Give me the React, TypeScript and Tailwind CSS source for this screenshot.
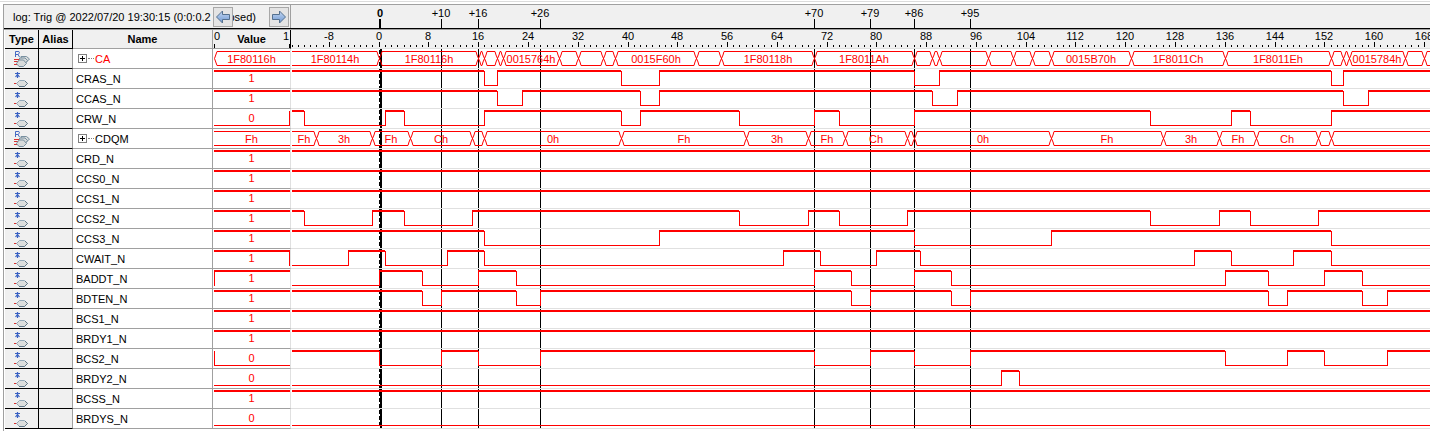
import React from "react";

const RED = "#ff0000";
const UNIT = 6.222;
const PANEL_LEFT = 291;
const PANEL_END = 4000;
const ROW = 20;
const RULER = 19;
const FIRST_SAMPLE = -14;
const LAST_SAMPLE = 168;

/** Horizontal position of a sample inside the wave panel. */
const at = (t: number) => Math.floor(379.12 + UNIT * t) - PANEL_LEFT;

type Line = {
  name: string;
  value: string;
  kind: "line";
  start: 0 | 1;
  edges: number[];
  edgeLeft?: boolean;
  edgeRight?: boolean;
};
type Bus = {
  name: string;
  value: string;
  kind: "bus";
  color?: string;
  edges: number[];
  labels: string[];
  edgeLeft?: boolean;
};
type Signal = Line | Bus;

const line = (name: string, value: string, start: 0 | 1, edges: number[] = [], extra: Partial<Line> = {}): Line => ({
  name,
  value,
  kind: "line",
  start,
  edges,
  ...extra,
});

const SIGNALS: Signal[] = [
  {
    name: "CA",
    value: "1F80116h",
    kind: "bus",
    color: RED,
    edgeLeft: true,
    edges: [0, 16, 17, 19, 20, 29, 32, 36, 38, 51, 55, 70, 86, 89, 90, 98, 102, 105, 108, 121, 136, 153, 155, 156, 165, 168],
    labels: [
      "1F80114h", "1F80116h", "", "", "", "0015764h", "", "", "", "0015F60h", "", "1F80118h", "1F8011Ah",
      "", "", "", "", "", "", "0015B70h", "1F8011Ch", "1F8011Eh", "", "", "0015784h", "",
    ],
  },
  line("CRAS_N", "1", 1, [17, 19, 39, 45, 86, 90, 153, 155]),
  line("CCAS_N", "1", 1, [19, 23, 42, 45, 89, 93, 155, 159]),
  line("CRW_N", "0", 1, [-12, 1, 4, 17, 39, 42, 58, 70, 74, 86, 124, 137, 140, 153], { edgeRight: true }),
  {
    name: "CDQM",
    value: "Fh",
    kind: "bus",
    edges: [-10, -1, 5, 15, 17, 39, 59, 69, 75, 85, 86, 108, 126, 135, 141, 151, 153],
    labels: ["Fh", "3h", "Fh", "Ch", "", "0h", "Fh", "3h", "Fh", "Ch", "", "0h", "Fh", "3h", "Fh", "Ch", ""],
  },
  line("CRD_N", "1", 1),
  line("CCS0_N", "1", 1),
  line("CCS1_N", "1", 1),
  line("CCS2_N", "1", 1, [-12, -1, 4, 15, 58, 69, 74, 85, 124, 135, 140, 151]),
  line("CCS3_N", "1", 1, [17, 45, 86, 108, 153]),
  line("CWAIT_N", "1", 0, [-5, 1, 11, 17, 65, 71, 80, 87, 131, 137, 147, 153], { edgeRight: true }),
  line("BADDT_N", "1", 0, [0, 7, 16, 22, 70, 76, 86, 92, 136, 143, 152, 158], { edgeLeft: true }),
  line("BDTEN_N", "1", 1, [7, 10, 22, 26, 76, 79, 92, 95, 143, 146, 158, 162]),
  line("BCS1_N", "1", 1),
  line("BRDY1_N", "1", 1),
  line("BCS2_N", "0", 1, [0, 10, 16, 26, 70, 79, 86, 95, 136, 146, 152, 162], { edgeLeft: true }),
  line("BRDY2_N", "0", 0, [100, 103]),
  line("BCSS_N", "1", 1),
  line("BRDYS_N", "0", 0),
];

const MARKERS = [10, 16, 26, 70, 79, 86, 95];

function LineTrace({ signal }: { signal: Line }) {
  const xs = [1, ...signal.edges.map(at), PANEL_END];
  return (
    <g fill={RED}>
      {xs.slice(0, -1).map((x, i) => {
        const high = (signal.start + i) % 2 === 1;
        return (
          <rect key={x} x={x} y={high ? 1 : 16} width={xs[i + 1] - x} height={high ? 2 : 1} />
        );
      })}
      {signal.edges.map((t) => (
        <rect key={`e${t}`} x={at(t)} y={2} width={1} height={15} />
      ))}
    </g>
  );
}

function BusTrace({ signal }: { signal: Bus }) {
  const xs = signal.edges.map(at);
  const bounds = [-2, ...xs, PANEL_END];
  return (
    <g>
      {bounds.slice(0, -1).map((x, i) => {
        const from = x + 3;
        const to = bounds[i + 1] - 2;
        return to > from ? (
          <path key={x} d={`M${from} 2.5H${to}M${from} 16.5H${to}`} stroke={RED} shapeRendering="crispEdges" />
        ) : null;
      })}
      {xs.map((x) => (
        <path
          key={`x${x}`}
          d={`M${x - 2} 2.5L${x - 1} 6L${x + 2} 13L${x + 3} 16.5M${x + 3} 2.5L${x + 2} 6L${x - 1} 13L${x - 2} 16.5`}
          stroke={RED}
          fill="none"
        />
      ))}
      {signal.labels.map((label, i) => {
        const from = i === 0 ? 0 : bounds[i];
        return label ? (
          <text key={i} x={Math.round((from + bounds[i + 1]) / 2)} y={14} fill={RED} textAnchor="middle">
            {label}
          </text>
        ) : null;
      })}
    </g>
  );
}

function ValueTrace({ signal }: { signal: Signal }) {
  return (
    <svg className="block h-[19px] w-full" aria-label={`${signal.name} value`}>
      {signal.kind === "bus" ? (
        <g stroke={RED} fill="none">
          {signal.edgeLeft ? (
            <path d="M77 2.5H4L1.5 9.5L4 16.5H77" />
          ) : (
            <path d="M1 2.5H77M1 16.5H77" />
          )}
        </g>
      ) : (
        <g fill={RED}>
          <rect x={1} y={signal.value === "1" ? 1 : 16} width={76} height={signal.value === "1" ? 2 : 1} />
          {signal.edgeLeft && <rect x={1} y={2} width={1} height={15} />}
          {signal.edgeRight && <rect x={76} y={2} width={1} height={15} />}
        </g>
      )}
      <text x="50%" y={signal.kind === "bus" ? 14 : 13} fill={RED} textAnchor="middle">
        {signal.value}
      </text>
    </svg>
  );
}

function LineIcon() {
  return (
    <svg className="block h-[19px] w-full" aria-hidden="true">
      <path d="M12.5 3V9M10 4.500H15M10.500 8L12.500 5.500L14.500 8" stroke="#3a62c4" strokeWidth="1.200" fill="none" />
      <path d="M9 14.5H12" stroke="#d83030" />
      <path d="M14.500 11.500H19.500L22.500 14.500L19.500 17.500H14.500L11.500 14.500Z" fill="#dcdedd" stroke="#93a8b8" />
      <path d="M14 17.500H19.500L22.500 14.500L20 12" stroke="#5f7686" fill="none" />
    </svg>
  );
}

function BusIcon() {
  return (
    <svg className="block h-[19px] w-full" aria-hidden="true">
      <path d="M10.5 8V2.5H13Q14.5 2.5 14.5 3.500T13 5.500H10.500M13 5.500L14.500 8" stroke="#4468c4" fill="none" />
      <path d="M9 10.500H14M9 12.500H14M9 15.500H12" stroke="#d83030" />
      <g fill="#d8dbdb" stroke="#7990a0">
        <path d="M16 7.500H21.500L24.500 10L21.500 13H17Z" />
        <path d="M14.500 9H20L22.500 11.500L20 15H15Z" />
        <path d="M14 11H18.500L21.500 14.500L18.500 17.500H14L11.500 14.500Z" />
      </g>
    </svg>
  );
}

function ArrowButton({ label, flip }: { label: string; flip?: boolean }) {
  return (
    <button
      type="button"
      aria-label={label}
      className="flex size-5 items-center justify-center border border-[#a8a8a8] bg-[#e4e4e4]"
    >
      <svg width="16" height="14" viewBox="0 0 16 14" aria-hidden="true">
        <defs>
          <linearGradient id={flip ? "arrow-next" : "arrow-prev"} x1="0" y1="0" x2="0" y2="1">
            <stop offset="0" stopColor="#c5d8f2" />
            <stop offset="1" stopColor="#6d97d2" />
          </linearGradient>
        </defs>
        <path
          d={flip ? "M1.500 4.500H8.500V1L14.500 7L8.500 13V9.500H1.500Z" : "M14.500 4.500H7.500V1L1.500 7L7.500 13V9.500H14.500Z"}
          fill={flip ? "url(#arrow-next)" : "url(#arrow-prev)"}
          stroke="#55718f"
        />
      </svg>
    </button>
  );
}

function MarkerBar() {
  return (
    <svg className="block h-[23px] min-w-0 flex-1" aria-label="Markers">
      <text x={at(0) + 1} y={12} textAnchor="middle" fontWeight="bold">
        0
      </text>
      <rect x={at(0)} y={14} width={2} height={9} />
      {MARKERS.map((t) => (
        <g key={t}>
          <text x={at(t)} y={12} textAnchor="middle">
            +{t}
          </text>
          <rect x={at(t)} y={14} width={1} height={9} />
        </g>
      ))}
    </svg>
  );
}

function WavePanel() {
  const ticks = Array.from({ length: LAST_SAMPLE - FIRST_SAMPLE + 1 }, (_, i) => i + FIRST_SAMPLE);
  const bottom = RULER + SIGNALS.length * ROW;
  return (
    <svg className="block h-[399px] min-w-0 flex-1" aria-label="Waveforms">
      <rect width="100%" height={RULER - 1} fill="#f0f0f0" />
      {ticks.map((t) => (
        <g key={t}>
          <rect x={at(t)} y={t % 8 === 0 ? 12 : 15} width={1} height={t % 8 === 0 ? 5 : 2} />
          {t % 8 === 0 && (
            <text x={at(t)} y={10} textAnchor="middle">
              {t}
            </text>
          )}
        </g>
      ))}
      <rect x={at(0) + 1} y={RULER} width={2} height={bottom - RULER} />
      <path
        d={`M${at(0)}.5 ${RULER + 1}V${bottom}`}
        stroke="#000"
        strokeDasharray="4 2"
        shapeRendering="crispEdges"
      />
      {MARKERS.map((t) => (
        <rect key={t} x={at(t)} y={RULER} width={1} height={bottom - RULER} />
      ))}
      {[0, ...SIGNALS.map((_, i) => i + 1)].map((i) => (
        <rect key={i} y={RULER - 1 + i * ROW} width="100%" height={1} fill="#e0e0e0" />
      ))}
      {SIGNALS.map((s, i) => (
        <g key={s.name} transform={`translate(0 ${RULER + i * ROW})`}>
          {s.kind === "bus" ? <BusTrace signal={s} /> : <LineTrace signal={s} />}
        </g>
      ))}
    </svg>
  );
}

export default function App() {
  return (
    <main className="bg-white pt-px font-['Liberation_Sans',Arial,sans-serif] text-[11px] leading-[14px] text-black">
      <div className="border-t border-[#dcdcdc] pt-[2px] pl-[3px]">
        <div className="min-h-[427px] border-t border-l border-[#a0a0a0]">
          <header className="flex h-6 overflow-hidden border-b border-black bg-[#f0f0f0]">
            <div className="flex w-[287px] shrink-0 items-center border-r border-[#a0a0a0] pl-[9px]">
              <h1 className="w-[200px] whitespace-nowrap">log: Trig @ 2022/07/20 19:30:15 (0:0:0.2 elapsed)</h1>
              <nav className="z-10 flex gap-9" aria-label="Trigger navigation">
                <ArrowButton label="Previous" />
                <ArrowButton label="Next" flip />
              </nav>
            </div>
            <MarkerBar />
          </header>
          <div className="flex overflow-hidden border-t border-[#a0a0a0] pl-px">
            <table className="w-[286px] shrink-0 table-fixed border-separate border-spacing-0">
              <colgroup>
                <col className="w-[34px]" />
                <col className="w-[34px]" />
                <col className="w-[140px]" />
                <col className="w-[78px]" />
              </colgroup>
              <thead className="bg-[#f0f0f0]">
                <tr className="h-[19px]">
                  <th className="border-r border-b border-black p-0">Type</th>
                  <th className="border-r border-b border-black p-0">Alias</th>
                  <th className="border-r border-b border-[#a0a0a0] p-0">Name</th>
                  <th className="border-r border-b border-r-black border-b-[#a0a0a0] p-0">
                    <div className="flex h-[18px] items-stretch justify-between">
                      <span className="flex w-3 flex-col items-start justify-between pl-px font-normal">
                        <span className="leading-[13px]">0</span>
                        <span className="h-1 w-px bg-black" />
                      </span>
                      <span className="self-center">Value</span>
                      <span className="flex w-3 flex-col items-end justify-between font-normal">
                        <span className="pr-px leading-[13px]">1</span>
                        <span className="h-1 w-px bg-black" />
                      </span>
                    </div>
                  </th>
                </tr>
              </thead>
              <tbody>
                {SIGNALS.map((s) => (
                  <tr key={s.name} className="h-5">
                    <td className="border-r border-b border-black bg-[#f0f0f0] p-0">
                      {s.kind === "bus" ? <BusIcon /> : <LineIcon />}
                    </td>
                    <td className="border-r border-b border-r-[#a0a0a0] border-b-black bg-[#f0f0f0] p-0" />
                    <td className="border-r border-b border-[#a0a0a0] p-0 pl-[3px]">
                      {s.kind === "bus" ? (
                        <div className={s.color ? "flex items-center text-[#ff0000]" : "flex items-center"}>
                          <button type="button" aria-label={`Expand ${s.name}`} className="ml-[2px]">
                            <svg width="9" height="9" className="block" aria-hidden="true">
                              <rect x=".5" y=".5" width="8" height="8" fill="#fff" stroke="#808080" />
                              <path d="M2 4.500H7M4.500 2V7" stroke="#000" />
                            </svg>
                          </button>
                          <span className="mr-px ml-px w-[6px] border-t border-dotted border-[#808080]" />
                          {s.name}
                        </div>
                      ) : (
                        s.name
                      )}
                    </td>
                    <td className="border-r border-b border-r-[#e0e0e0] border-b-[#a0a0a0] p-0">
                      <ValueTrace signal={s} />
                    </td>
                  </tr>
                ))}
              </tbody>
            </table>
            <WavePanel />
          </div>
        </div>
      </div>
    </main>
  );
}
